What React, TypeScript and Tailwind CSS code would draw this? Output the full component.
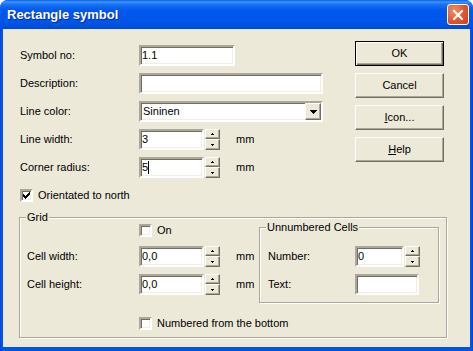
import React from 'react';

const sunken =
  'bg-white border-2 border-t-[#ACA899] border-l-[#ACA899] border-b-white border-r-white shadow-[inset_1px_1px_0_#716F64,inset_-1px_-1px_0_#F1EFE2]';
const raised =
  'bg-[#ECE9D8] border border-t-white border-l-white border-b-[#716F64] border-r-[#716F64] shadow-[inset_-1px_-1px_0_#ACA899]';

const Edit: React.FC<{ className: string; value?: string; caret?: boolean }> = ({ className, value, caret }) => (
  <div className={`${sunken} h-[21px] flex items-center pl-px ${className}`}>
    <span className="leading-[13px]">{value}</span>
    {caret && <span className="w-px h-[13px] bg-black" />}
  </div>
);

const Spin: React.FC = () => (
  <div className="ml-px flex flex-col w-[15px] h-[21px]">
    <div className={`${raised} h-[10px] flex items-center justify-center`}>
      <svg width="3" height="2" viewBox="0 0 3 2" shapeRendering="crispEdges">
        <path d="M1 0h1v1h1v1H0V1h1z" fill="#000" />
      </svg>
    </div>
    <div className={`${raised} h-[11px] flex items-center justify-center`}>
      <svg width="3" height="2" viewBox="0 0 3 2" shapeRendering="crispEdges">
        <path d="M0 0h3v1H2v1H1V1H0z" fill="#000" />
      </svg>
    </div>
  </div>
);

const Check: React.FC<{ checked?: boolean; label: string }> = ({ checked, label }) => (
  <div className="flex items-center h-[13px]">
    <div className={`${sunken} w-[13px] h-[13px] flex items-center justify-center`}>
      {checked && (
        <svg width="7" height="7" viewBox="0 0 7 7" shapeRendering="crispEdges">
          <path d="M6 0h1v3H6v1H5v1H4v1H3v1H2V6H1V5H0V2h1v1h1v1h1V3h1V2h1V1h1z" fill="#000" />
        </svg>
      )}
    </div>
    <span className="ml-[5px] whitespace-nowrap">{label}</span>
  </div>
);

const Button: React.FC<{ children: React.ReactNode; isDefault?: boolean }> = ({ children, isDefault }) => (
  <div
    className={
      isDefault
        ? 'h-[25px] w-[89px] flex items-center justify-center bg-[#ECE9D8] border border-black shadow-[inset_1px_1px_0_white,inset_-1px_-1px_0_#716F64,inset_-2px_-2px_0_#ACA899]'
        : `${raised} h-[25px] w-[89px] flex items-center justify-center`
    }
  >
    {children}
  </div>
);

const Row: React.FC<{ label: string; labelW: string; children: React.ReactNode }> = ({ label, labelW, children }) => (
  <div className="flex items-center h-[21px]">
    <span className={`${labelW} whitespace-nowrap`}>{label}</span>
    {children}
  </div>
);

const Group: React.FC<{ title: string; className: string; children: React.ReactNode }> = ({ title, className, children }) => (
  <div className={`relative border border-[#ACA899] shadow-[1px_1px_0_white,inset_1px_1px_0_white] ${className}`}>
    <span className="absolute -top-[7px] left-[6px] px-px leading-[13px] bg-[#ECE9D8]">{title}</span>
    {children}
  </div>
);

export default function App() {
  return (
    <div className="w-[473px] h-[351px] bg-white font-['Liberation_Sans',Arial,sans-serif] text-[11px] text-black">
      <div className="h-full flex flex-col rounded-t-[8px] overflow-hidden bg-[#0553E1]">
        <div className="h-[29px] shrink-0 flex items-center justify-between pl-[7px] pr-[4px] bg-[linear-gradient(to_bottom,#0A5FE6_0%,#3D95FF_7%,#1C74F6_14%,#0058EE_35%,#0055E8_80%,#0049D6_100%)]">
          <span className="text-white font-bold text-[13px] [text-shadow:1px_1px_0_#0A2A8A]">Rectangle symbol</span>
          <div className="w-[22px] h-[21px] rounded-[3px] border border-white bg-[radial-gradient(circle_at_30%_30%,#F0906A_0%,#E0552E_55%,#C8401C_100%)] flex items-center justify-center">
            <svg width="10" height="10" viewBox="0 0 10 10">
              <path d="M1 1L9 9M9 1L1 9" stroke="#fff" strokeWidth="2.2" strokeLinecap="square" />
            </svg>
          </div>
        </div>
        <div className="flex-1 flex px-[3px] pb-[4px] bg-[linear-gradient(to_right,#0831D9_0px,#0055E5_1px,#0055E5_calc(100%-1px),#0831D9_100%)]">
          <div className="flex-1 flex flex-col bg-[#ECE9D8] pl-[16px] pr-[23px]">
            <div className="flex items-start">
              <div className="flex flex-col pt-[16px] pl-px">
                <div className="flex flex-col gap-[7px]">
                  <Row label="Symbol no:" labelW="w-[119px]">
                    <Edit className="w-[96px]" value="1.1" />
                  </Row>
                  <Row label="Description:" labelW="w-[119px]">
                    <Edit className="w-[184px]" />
                  </Row>
                  <Row label="Line color:" labelW="w-[119px]">
                    <div className={`${sunken} w-[184px] h-[21px] flex items-center`}>
                      <span className="flex-1 pl-[2px]">Sininen</span>
                      <div className={`${raised} w-[16px] h-[17px] flex items-center justify-center`}>
                        <svg width="7" height="4" viewBox="0 0 7 4" shapeRendering="crispEdges">
                          <path d="M0 0h7v1H6v1H5v1H4v1H3V3H2V2H1V1H0z" fill="#000" />
                        </svg>
                      </div>
                    </div>
                  </Row>
                  <Row label="Line width:" labelW="w-[119px]">
                    <Edit className="w-[65px]" value="3" />
                    <Spin />
                    <span className="ml-[16px]">mm</span>
                  </Row>
                  <Row label="Corner radius:" labelW="w-[119px]">
                    <Edit className="w-[65px]" value="5" caret />
                    <Spin />
                    <span className="ml-[16px]">mm</span>
                  </Row>
                </div>
                <div className="mt-[11px]">
                  <Check checked label="Orientated to north" />
                </div>
              </div>
              <div className="ml-auto mt-[12px] mr-[3px] flex flex-col gap-[7px]">
                <Button isDefault>OK</Button>
                <Button>Cancel</Button>
                <Button>
                  <span>
                    <span className="underline">I</span>con...
                  </span>
                </Button>
                <Button>
                  <span>
                    <span className="underline">H</span>elp
                  </span>
                </Button>
              </div>
            </div>

            <Group title="Grid" className="mt-[15px] h-[121px] pl-[7px] pt-[6px]">
              <div className="flex items-start">
                <div className="w-[232px] flex flex-col">
                  <div className="ml-[112px]">
                    <Check label="On" />
                  </div>
                  <div className="mt-[9px] flex flex-col gap-[7px]">
                    <Row label="Cell width:" labelW="w-[112px]">
                      <Edit className="w-[65px]" value="0,0" />
                      <Spin />
                      <span className="ml-[16px]">mm</span>
                    </Row>
                    <Row label="Cell height:" labelW="w-[112px]">
                      <Edit className="w-[65px]" value="0,0" />
                      <Spin />
                      <span className="ml-[16px]">mm</span>
                    </Row>
                  </div>
                </div>
                <Group title="Unnumbered Cells" className="mt-[3px] w-[180px] h-[76px] pl-[8px] pt-[18px]">
                  <div className="flex flex-col gap-[7px]">
                    <Row label="Number:" labelW="w-[87px]">
                      <Edit className="w-[49px]" value="0" />
                      <Spin />
                    </Row>
                    <Row label="Text:" labelW="w-[87px]">
                      <Edit className="w-[64px]" />
                    </Row>
                  </div>
                </Group>
              </div>
              <div className="mt-[14px] ml-[112px]">
                <Check label="Numbered from the bottom" />
              </div>
            </Group>
          </div>
        </div>
      </div>
    </div>
  );
}
